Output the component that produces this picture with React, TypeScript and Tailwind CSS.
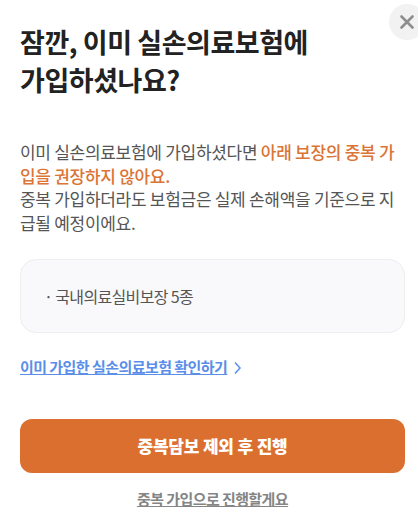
import React from "react";

interface CoverageItem {
  name: string;
}

const coverages: CoverageItem[] = [{ name: "국내의료실비보장 5종" }];

export default function App() {
  return (
    <div className="relative h-[530px] w-[418px] overflow-hidden bg-white px-5 font-['Noto_Sans_CJK_KR','Noto_Sans',sans-serif]">
      <button
        aria-label="닫기"
        className="absolute left-[389px] top-1 flex h-9 w-9 items-center justify-center rounded-full bg-[#f2f2f2]"
      >
        <svg width="14" height="14" viewBox="0 0 14 14" fill="none" stroke="#8e8e8e" strokeWidth="2.6" strokeLinecap="round">
          <path d="M1.5 1.5l11 11M12.5 1.5l-11 11" />
        </svg>
      </button>

      <h1 className="pt-[23px] text-[27px] font-bold leading-[38px] tracking-[-0.45px] text-[#222]">
        잠깐, 이미 실손의료보험에
        <br />
        가입하셨나요?
      </h1>

      <p className="mt-[41px] whitespace-nowrap text-[17px] leading-[23.7px] tracking-[-0.29px] text-[#555]">
        이미 실손의료보험에 가입하셨다면{" "}
        <span className="font-medium text-[#db7435]">
          아래 보장의 중복 가
          <br />
          입을 권장하지 않아요.
        </span>
        <br />
        중복 가입하더라도 보험금은 실제 손해액을 기준으로 지
        <br />
        급될 예정이에요.
      </p>

      <ul className="mt-[24.2px] flex h-[74px] w-[385px] flex-col justify-center rounded-2xl border border-[#eeeeee] bg-[#f9f9fb] px-[23px]">
        {coverages.map((item) => (
          <li key={item.name} className="text-[16px] tracking-[-0.65px] text-[#555]">
            · {item.name}
          </li>
        ))}
      </ul>

      <a className="mt-[22px] flex h-6 items-center text-[15px] font-bold tracking-[-0.55px] text-[#5a8ee8]">
        <span className="underline underline-offset-1">이미 가입한 실손의료보험 확인하기</span>
        <svg className="ml-[7px] mt-0.5" width="8" height="12" viewBox="0 0 8 12" fill="none" stroke="currentColor" strokeWidth="1.5">
          <path d="M1 .5l5 5.5-5 5.5" />
        </svg>
      </a>

      <button className="mt-10 block h-[54px] w-[385px] rounded-xl bg-[#db6f30] text-[17px] font-black tracking-[-0.2px] text-white">
        중복담보 제외 후 진행
      </button>
      <button className="mt-3.5 block w-[385px] text-[15px] font-bold leading-6 tracking-[-0.58px] text-[#858585] underline underline-offset-1">
        중복 가입으로 진행할게요
      </button>
    </div>
  );
}
